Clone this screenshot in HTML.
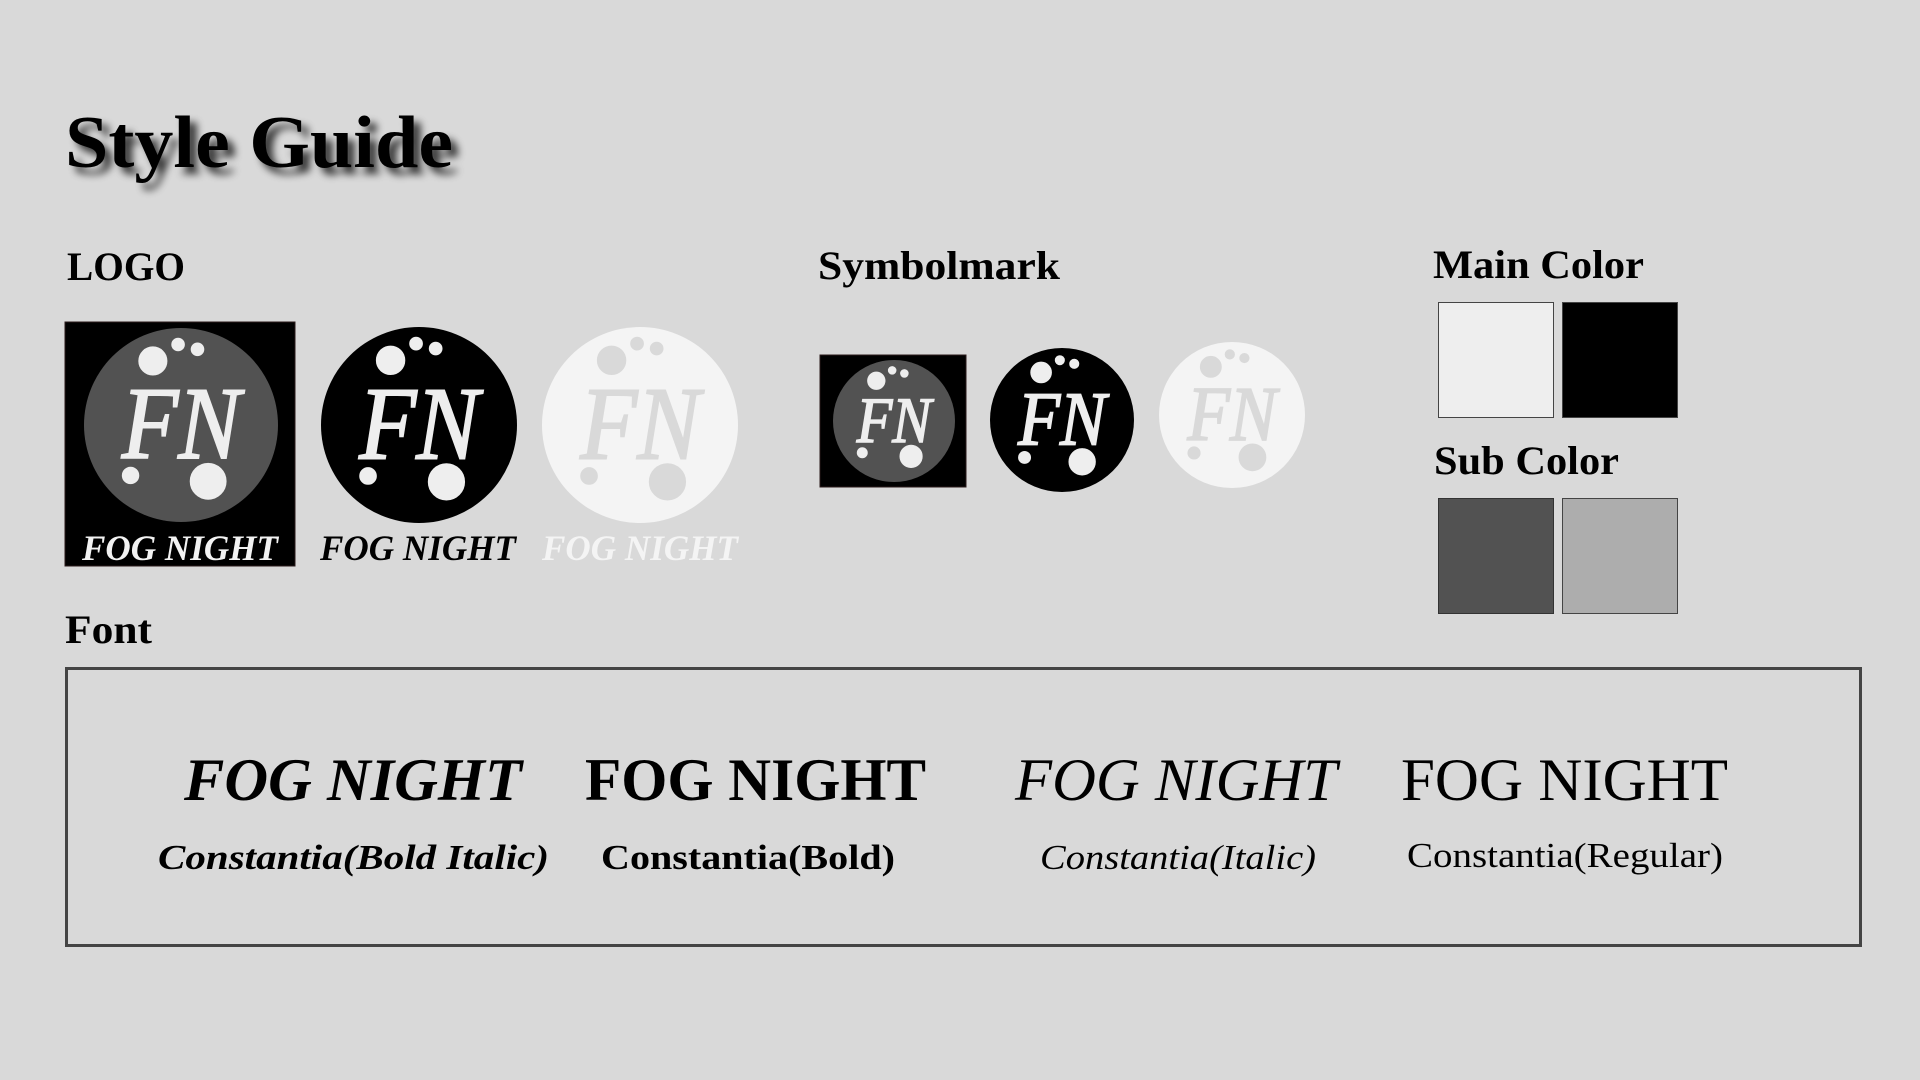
<!DOCTYPE html>
<html><head><meta charset="utf-8"><style>
html,body{margin:0;padding:0;background:#d9d9d9;}
svg{display:block;}
text{font-family:"Liberation Serif",serif;}
</style></head><body>
<svg width="1920" height="1080" viewBox="0 0 1920 1080" xmlns="http://www.w3.org/2000/svg">
<defs>
<filter id="sh" x="-10%" y="-30%" width="130%" height="170%">
<feGaussianBlur in="SourceAlpha" stdDeviation="4"/>
<feOffset dx="7" dy="7" result="b"/>
<feComponentTransfer><feFuncA type="linear" slope="0.75"/></feComponentTransfer>
<feMerge><feMergeNode/><feMergeNode in="SourceGraphic"/></feMerge>
</filter>
</defs>
<rect width="1920" height="1080" fill="#d9d9d9"/>
<text x="65" y="167" font-size="74" font-weight="bold" textLength="388" lengthAdjust="spacingAndGlyphs" filter="url(#sh)">Style Guide</text>
<text x="67" y="280" font-size="40" font-weight="bold" textLength="118" lengthAdjust="spacingAndGlyphs">LOGO</text>
<text x="818" y="279" font-size="40" font-weight="bold" textLength="242" lengthAdjust="spacingAndGlyphs">Symbolmark</text>
<text x="1433" y="278" font-size="40" font-weight="bold" textLength="211" lengthAdjust="spacingAndGlyphs">Main Color</text>
<text x="1434" y="474" font-size="40" font-weight="bold" textLength="185" lengthAdjust="spacingAndGlyphs">Sub Color</text>
<text x="65" y="643" font-size="40" font-weight="bold" textLength="87" lengthAdjust="spacingAndGlyphs">Font</text>

<!-- Logo 1 -->
<rect x="65" y="322" width="230" height="244" fill="#000" stroke="#2a1a1a" stroke-width="1"/>
<g transform="translate(181,425) scale(0.97)">
<circle r="100" fill="#525252"/>
<g fill="#eeeeee" stroke="#eeeeee"><circle cx="-29" cy="-66" r="14.5"/><circle cx="-3" cy="-83" r="6.5"/><circle cx="17" cy="-78" r="6.5"/><circle cx="-52" cy="52" r="8.5"/><circle cx="28" cy="58" r="18.5"/>
<text x="-61" y="34" font-size="106" font-style="italic" stroke-width="2" textLength="122" lengthAdjust="spacingAndGlyphs">FN</text></g>
</g>
<text x="82" y="560" font-size="36" font-weight="bold" font-style="italic" fill="#f2f2f2" textLength="196" lengthAdjust="spacingAndGlyphs">FOG NIGHT</text>

<!-- Logo 2 -->
<g transform="translate(419,425) scale(0.98)">
<circle r="100" fill="#000"/>
<g fill="#eeeeee" stroke="#eeeeee"><circle cx="-29" cy="-66" r="14.5"/><circle cx="-3" cy="-83" r="6.5"/><circle cx="17" cy="-78" r="6.5"/><circle cx="-52" cy="52" r="8.5"/><circle cx="28" cy="58" r="18.5"/>
<text x="-61" y="34" font-size="106" font-style="italic" stroke-width="2" textLength="122" lengthAdjust="spacingAndGlyphs">FN</text></g>
</g>
<text x="320" y="560" font-size="36" font-weight="bold" font-style="italic" fill="#000" textLength="196" lengthAdjust="spacingAndGlyphs">FOG NIGHT</text>

<!-- Logo 3 -->
<g transform="translate(640,425) scale(0.98)">
<circle r="100" fill="#f4f4f4"/>
<g fill="#d9d9d9" stroke="#d9d9d9"><circle cx="-29" cy="-66" r="14.5"/><circle cx="-3" cy="-83" r="6.5"/><circle cx="17" cy="-78" r="6.5"/><circle cx="-52" cy="52" r="8.5"/><circle cx="28" cy="58" r="18.5"/>
<text x="-61" y="34" font-size="106" font-style="italic" stroke-width="2" textLength="122" lengthAdjust="spacingAndGlyphs">FN</text></g>
</g>
<text x="542" y="560" font-size="36" font-weight="bold" font-style="italic" fill="#f4f4f4" textLength="196" lengthAdjust="spacingAndGlyphs">FOG NIGHT</text>

<!-- Symbolmarks -->
<rect x="820" y="355" width="146" height="132" fill="#000" stroke="#2a1a1a" stroke-width="1"/>
<g transform="translate(894,421) scale(0.61)">
<circle r="100" fill="#525252"/>
<g fill="#eeeeee" stroke="#eeeeee"><circle cx="-29" cy="-66" r="14.5"/><circle cx="-3" cy="-83" r="6.5"/><circle cx="17" cy="-78" r="6.5"/><circle cx="-52" cy="52" r="8.5"/><circle cx="28" cy="58" r="18.5"/>
<text x="-61" y="34" font-size="106" font-style="italic" stroke-width="2.5" textLength="122" lengthAdjust="spacingAndGlyphs">FN</text></g>
</g>
<g transform="translate(1062,420) scale(0.72)">
<circle r="100" fill="#000"/>
<g fill="#eeeeee" stroke="#eeeeee"><circle cx="-29" cy="-66" r="14.5"/><circle cx="-3" cy="-83" r="6.5"/><circle cx="17" cy="-78" r="6.5"/><circle cx="-52" cy="52" r="8.5"/><circle cx="28" cy="58" r="18.5"/>
<text x="-61" y="34" font-size="106" font-style="italic" stroke-width="2.5" textLength="122" lengthAdjust="spacingAndGlyphs">FN</text></g>
</g>
<g transform="translate(1232,415) scale(0.73)">
<circle r="100" fill="#f4f4f4"/>
<g fill="#d9d9d9" stroke="#d9d9d9"><circle cx="-29" cy="-66" r="14.5"/><circle cx="-3" cy="-83" r="6.5"/><circle cx="17" cy="-78" r="6.5"/><circle cx="-52" cy="52" r="8.5"/><circle cx="28" cy="58" r="18.5"/>
<text x="-61" y="34" font-size="106" font-style="italic" stroke-width="2.5" textLength="122" lengthAdjust="spacingAndGlyphs">FN</text></g>
</g>

<!-- Swatches -->
<rect x="1438.5" y="302.5" width="115" height="115" fill="#eeeeee" stroke="#444" stroke-width="1"/>
<rect x="1562.5" y="302.5" width="115" height="115" fill="#000" stroke="#444" stroke-width="1"/>
<rect x="1438.5" y="498.5" width="115" height="115" fill="#525252" stroke="#333" stroke-width="1"/>
<rect x="1562.5" y="498.5" width="115" height="115" fill="#adadad" stroke="#444" stroke-width="1"/>

<!-- Font box -->
<rect x="66.5" y="668.5" width="1794" height="277" fill="none" stroke="#444" stroke-width="3"/>
<text x="184" y="800" font-size="60" font-weight="bold" font-style="italic" textLength="338" lengthAdjust="spacingAndGlyphs">FOG NIGHT</text>
<text x="585" y="800" font-size="60" font-weight="bold" textLength="341" lengthAdjust="spacingAndGlyphs">FOG NIGHT</text>
<text x="1015" y="800" font-size="60" font-style="italic" textLength="322" lengthAdjust="spacingAndGlyphs">FOG NIGHT</text>
<text x="1401" y="800" font-size="60" textLength="327" lengthAdjust="spacingAndGlyphs">FOG NIGHT</text>
<text x="158" y="869" font-size="35" font-weight="bold" font-style="italic" textLength="391" lengthAdjust="spacingAndGlyphs">Constantia(Bold Italic)</text>
<text x="601" y="869" font-size="35" font-weight="bold" textLength="294" lengthAdjust="spacingAndGlyphs">Constantia(Bold)</text>
<text x="1040" y="869" font-size="35" font-style="italic" textLength="276" lengthAdjust="spacingAndGlyphs">Constantia(Italic)</text>
<text x="1407" y="867" font-size="35" textLength="316" lengthAdjust="spacingAndGlyphs">Constantia(Regular)</text>
</svg>
</body></html>
